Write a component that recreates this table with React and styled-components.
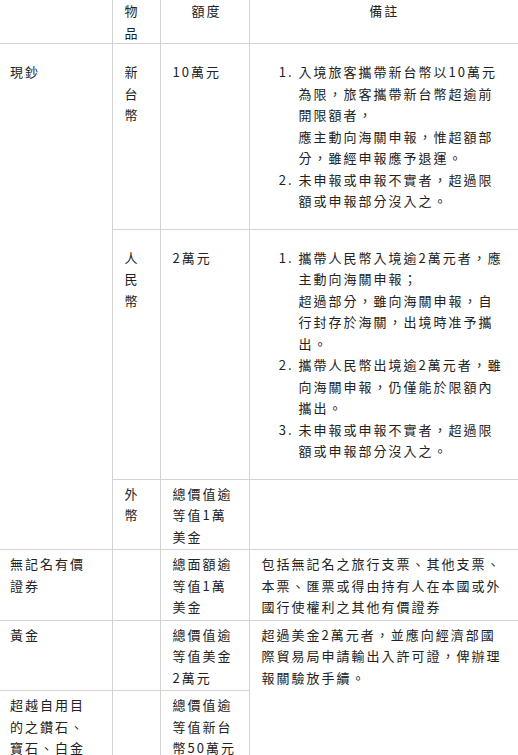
import React from "react";
import styled, { createGlobalStyle } from "styled-components";

const GlobalStyle = createGlobalStyle`
  html, body {
    margin: 0;
    padding: 0;
    background: #ffffff;
    overflow-x: hidden;
  }
  body {
    font-family: "Noto Sans CJK TC", "Noto Sans", sans-serif;
    color: #222222;
  }
`;

const rows = [
  {
    item: "現鈔",
    itemSpan: 3,
    kind: "新台幣",
    limit: "10萬元",
    roomy: true,
    notes: [
      ["入境旅客攜帶新台幣以10萬元為限，旅客攜帶新台幣超逾前開限額者，", "應主動向海關申報，惟超額部分，雖經申報應予退運。"],
      ["未申報或申報不實者，超過限額或申報部分沒入之。"],
    ],
  },
  {
    kind: "人民幣",
    limit: "2萬元",
    roomy: true,
    notes: [
      ["攜帶人民幣入境逾2萬元者，應主動向海關申報；", "超過部分，雖向海關申報，自行封存於海關，出境時准予攜出。"],
      ["攜帶人民幣出境逾2萬元者，雖向海關申報，仍僅能於限額內攜出。"],
      ["未申報或申報不實者，超過限額或申報部分沒入之。"],
    ],
  },
  {
    kind: "外幣",
    limit: "總價值逾等值1萬美金",
    note: "",
  },
  {
    item: "無記名有價證券",
    kind: "",
    limit: "總面額逾等值1萬美金",
    note: "包括無記名之旅行支票、其他支票、本票、匯票或得由持有人在本國或外國行使權利之其他有價證券",
  },
  {
    item: "黃金",
    kind: "",
    limit: "總價值逾等值美金2萬元",
    note: "超過美金2萬元者，並應向經濟部國際貿易局申請輸出入許可證，俾辦理報關驗放手續。",
    noteSpan: 2,
  },
  {
    item: "超越自用目的之鑽石、寶石、白金",
    kind: "",
    limit: "總價值逾等值新台幣50萬元",
    skipNote: true,
  },
];

const App = () => {
  return (
    <>
      <GlobalStyle />
      <Table>
        <colgroup>
          <col style={{ width: 112 }} />
          <col style={{ width: 48 }} />
          <col style={{ width: 89 }} />
          <col style={{ width: 276 }} />
        </colgroup>
        <thead>
          <tr>
            <Head $first></Head>
            <Head $align="left">物品</Head>
            <Head>額度</Head>
            <Head $wide>備註</Head>
          </tr>
        </thead>
        <tbody>
          {rows.map((row, i) => (
            <tr key={i}>
              {row.item !== undefined && (
                <Cell $first $roomy={row.roomy} rowSpan={row.itemSpan || 1}>
                  {row.item}
                </Cell>
              )}
              <Cell $roomy={row.roomy}>{row.kind}</Cell>
              <Cell $roomy={row.roomy}>{row.limit}</Cell>
              {!row.skipNote && (
                <Cell $wide $roomy={row.roomy} rowSpan={row.noteSpan || 1}>
                  {row.notes ? (
                    <NoteList>
                      {row.notes.map((parts, j) => (
                        <li key={j}>
                          {parts.map((p, k) => (
                            <React.Fragment key={k}>
                              {k > 0 && <br />}
                              {p}
                            </React.Fragment>
                          ))}
                        </li>
                      ))}
                    </NoteList>
                  ) : (
                    row.note
                  )}
                </Cell>
              )}
            </tr>
          ))}
        </tbody>
      </Table>
    </>
  );
};

export default App;

const Table = styled.table`
  table-layout: fixed;
  width: 525px;
  border-collapse: collapse;
  font-size: 13px;
  line-height: 21.5px;
  letter-spacing: 2px;
`;

const Head = styled.th`
  font-weight: 400;
  text-align: ${(p) => p.$align || "center"};
  vertical-align: top;
  padding: 0 ${(p) => (p.$wide ? "18px" : "8px")} 0 ${(p) => (p.$first ? "10px" : "12px")};
  border-bottom: 1px solid #d3d3d3;
  border-left: ${(p) => (p.$first ? "none" : "1px solid #d3d3d3")};
`;

const Cell = styled.td`
  vertical-align: top;
  text-align: left;
  word-break: break-all;
  padding: ${(p) => (p.$roomy ? "17px" : "3px")}
    ${(p) => (p.$wide ? "18px" : p.$first ? "14px" : "8px")}
    ${(p) => (p.$roomy ? "17px" : "2px")}
    ${(p) => (p.$first ? "10px" : "12px")};
  border-bottom: 1px solid #d3d3d3;
  border-left: ${(p) => (p.$first ? "none" : "1px solid #d3d3d3")};
`;

const NoteList = styled.ol`
  margin: 0;
  padding: 0 1px 0 37px;
`;
